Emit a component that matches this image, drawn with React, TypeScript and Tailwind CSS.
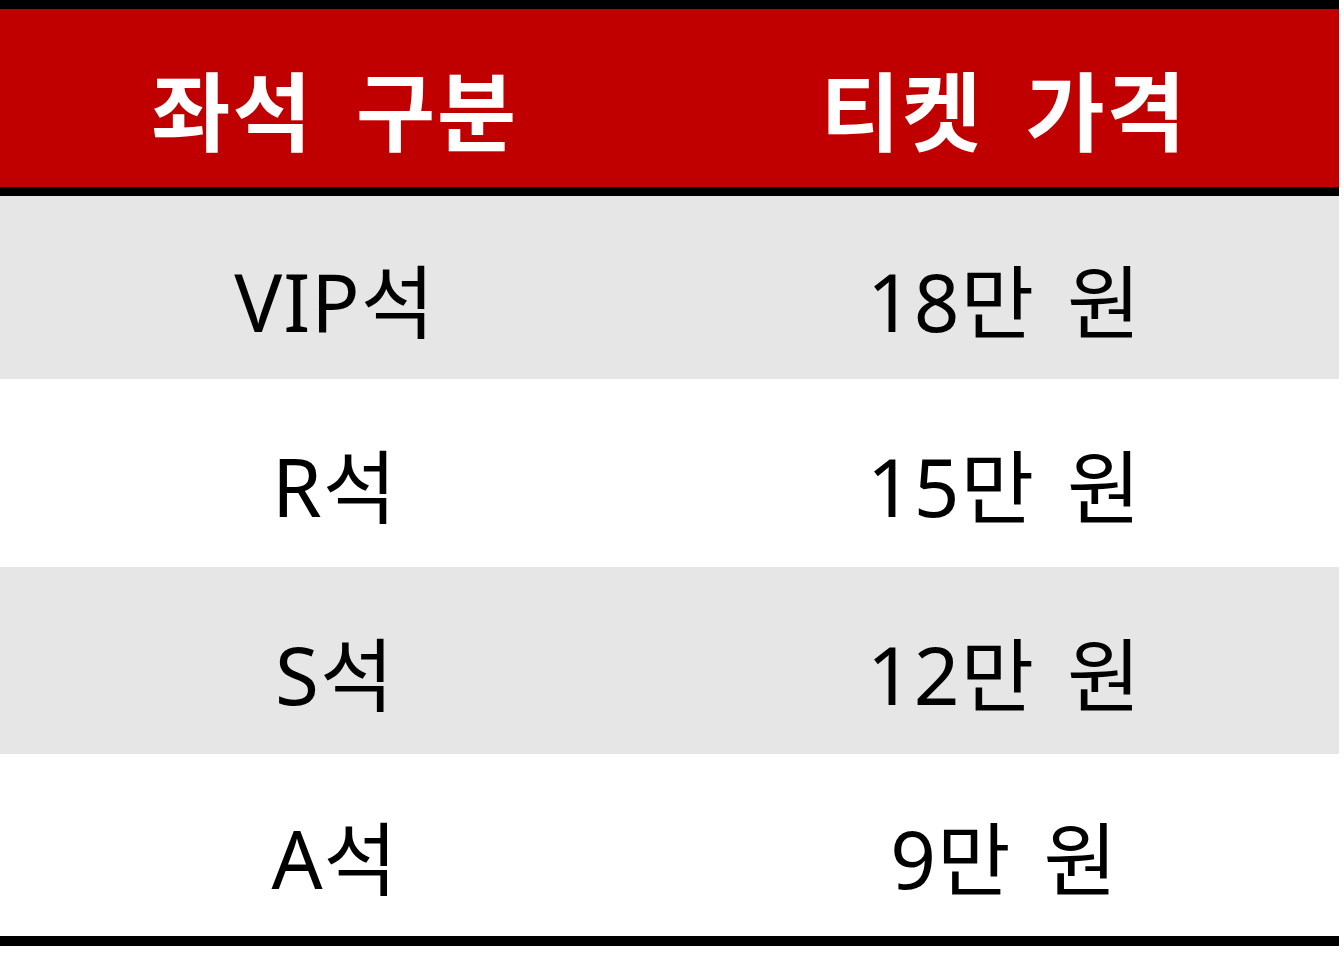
import React from 'react';

const rows = [
  { seat: 'VIP석', price: '18만 원', bg: 'bg-[#e7e6e6]', h: 'h-[183px]' },
  { seat: 'R석', price: '15만 원', bg: 'bg-white', h: 'h-[188px]' },
  { seat: 'S석', price: '12만 원', bg: 'bg-[#e7e6e6]', h: 'h-[187px]' },
  { seat: 'A석', price: '9만 원', bg: 'bg-white', h: 'h-[182px]' },
];

export default function App() {
  return (
    <div className="w-[1344px] h-[962px] bg-white" style={{ fontFamily: '"Noto Sans", "Noto Sans CJK KR", sans-serif' }}>
      <div className="w-[1339px]">
        {/* header */}
        <div className="h-[196px] bg-[#c00000] border-t-[9px] border-b-[9px] border-black grid grid-cols-2 items-center text-white font-bold text-[86px] leading-none tracking-[2px] [word-spacing:18px]">
          <div className="text-center pt-[28px]">좌석 구분</div>
          <div className="text-center pt-[28px]">티켓 가격</div>
        </div>

        {rows.map((r) => (
          <div key={r.seat} className={`${r.bg} ${r.h} grid grid-cols-2 items-center text-black text-[80px] leading-none tracking-[1px] [word-spacing:10px]`}>
            <div className="text-center pt-[26px]">{r.seat}</div>
            <div className="text-center pt-[26px]">{r.price}</div>
          </div>
        ))}

        <div className="h-[10px] bg-black" />
      </div>
    </div>
  );
}
